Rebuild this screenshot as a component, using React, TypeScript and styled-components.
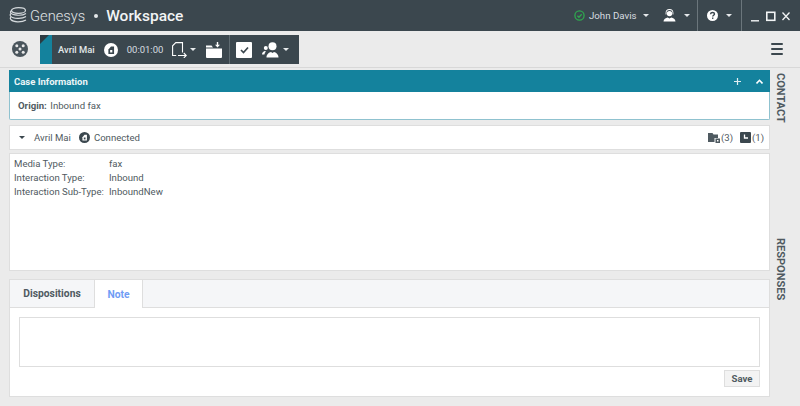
import React from 'react';
import styled, { createGlobalStyle } from 'styled-components';

const GlobalStyle = createGlobalStyle`
  html, body {
    margin: 0;
    padding: 0;
    width: 800px;
    height: 406px;
    overflow: hidden;
    background: #ebebeb;
    font-family: Roboto, "Liberation Sans", sans-serif;
  }
  * { box-sizing: border-box; }
`;

const Page = styled.div`
  width: 800px;
  height: 406px;
  display: flex;
  flex-direction: column;
  background: #ebebeb;
  color: #4f5a61;
`;

const TitleBar = styled.header`
  height: 31px;
  flex: none;
  display: flex;
  align-items: center;
  background: #3b474e;
  color: #fff;
`;

const Brand = styled.div`
  display: flex;
  align-items: center;
  padding-left: 9px;
  flex: 1;
`;

const BrandName = styled.span`
  margin-left: 3px;
  font-size: 14.7px;
  font-weight: 300;
  color: #e0e4e6;
`;

const BrandDot = styled.span`
  width: 4px;
  height: 4px;
  margin: 1px 8px 0 9px;
  border-radius: 50%;
  background: #e4e8ea;
`;

const ProductName = styled.span`
  font-size: 15.5px;
  font-weight: 500;
  color: #f2f4f5;
`;

const TitleGroup = styled.div<{ $divider?: boolean; $width: number }>`
  height: 31px;
  width: ${(p) => p.$width}px;
  flex: none;
  display: flex;
  align-items: center;
  border-left: ${(p) => (p.$divider ? '1px solid #6b767c' : 'none')};
  padding-left: ${(p) => (p.$divider ? 9 : 0)}px;
`;

const AgentName = styled.span`
  font-size: 9.7px;
  color: #d8dde0;
  margin-left: 4px;
`;

const Caret = styled.span<{ $color?: string; $gap?: number }>`
  width: 0;
  height: 0;
  flex: none;
  margin-left: ${(p) => p.$gap ?? 0}px;
  border-left: 3px solid transparent;
  border-right: 3px solid transparent;
  border-top: 3px solid ${(p) => p.$color ?? '#e6e9eb'};
`;

const ToolBar = styled.div`
  height: 37px;
  flex: none;
  display: flex;
  align-items: center;
  padding-left: 12px;
  border-bottom: 1px solid #d8d8d8;
`;

const InteractionBlock = styled.div`
  margin-left: 12px;
  width: 259px;
  height: 29px;
  margin-top: 1px;
  display: flex;
  align-items: center;
  background: #3b474e;
  color: #fff;
`;

const TealFlag = styled.span`
  position: relative;
  width: 12px;
  height: 29px;
  flex: none;
  background: #14829d;
  &::before {
    content: '';
    position: absolute;
    left: 0;
    top: 0;
    border-top: 9px solid #2c3a41;
    border-right: 9px solid transparent;
  }
`;

const CallerName = styled.span`
  margin-left: 6px;
  font-size: 9.4px;
  font-weight: 500;
  color: #e3e7e9;
`;

const Timer = styled.span`
  margin-left: 9px;
  font-size: 9.5px;
  color: #d8dde0;
`;

const BlockIcon = styled.span<{ $gap: number }>`
  display: inline-flex;
  flex: none;
  margin-left: ${(p) => p.$gap}px;
`;

const BlockDivider = styled.span`
  width: 1px;
  height: 29px;
  margin-left: 7px;
  flex: none;
  background: #5f6b71;
`;

const CheckBox = styled.span`
  width: 16px;
  height: 16px;
  margin-left: 6px;
  flex: none;
  display: flex;
  align-items: center;
  justify-content: center;
  border-radius: 1px;
  background: #fff;
`;

const Spacer = styled.div`
  flex: 1;
`;

const MenuButton = styled.div`
  width: 12px;
  margin-right: 17px;
  display: flex;
  flex-direction: column;
  gap: 2.5px;
  span {
    height: 2.5px;
    border-radius: 1px;
    background: #3b474e;
  }
`;

const Workspace = styled.div`
  flex: 1;
  display: flex;
  min-height: 0;
`;

const Content = styled.main`
  width: 761px;
  margin-left: 9px;
  padding-top: 2px;
  flex: none;
  display: flex;
  flex-direction: column;
`;

const CaseCard = styled.section`
  height: 50px;
  flex: none;
  display: flex;
  flex-direction: column;
  background: #fff;
  border: 1px solid #8fc2cf;
  border-top: none;
  border-radius: 0 0 2px 2px;
`;

const CaseHeader = styled.div`
  height: 22px;
  margin: 0 -1px;
  padding: 0 7px 0 5px;
  flex: none;
  display: flex;
  align-items: center;
  background: #14829d;
  color: #eef6f8;
  font-size: 9.5px;
  font-weight: 700;
`;

const CaseTitle = styled.span`
  flex: 1;
`;

const CaseAction = styled.span<{ $gap: number }>`
  display: inline-flex;
  margin-left: ${(p) => p.$gap}px;
`;

const CaseBody = styled.div`
  flex: 1;
  display: flex;
  align-items: center;
  gap: 3.5px;
  padding-left: 8px;
  font-size: 9.6px;
`;

const OriginLabel = styled.span`
  font-weight: 700;
`;

const PartyRow = styled.div`
  height: 25px;
  margin-top: 5px;
  padding: 0 5px 0 9px;
  flex: none;
  display: flex;
  align-items: center;
  background: #fff;
  border: 1px solid #dedede;
  font-size: 9.6px;
`;

const PartyName = styled.span`
  margin-left: 9px;
`;

const PartyStatus = styled.span`
  margin-left: 4px;
`;

const MediaBadge = styled.span`
  display: inline-flex;
  margin-left: 8px;
`;

const Counter = styled.span`
  display: inline-flex;
  align-items: center;
  gap: 1px;
  margin-left: 7px;
`;

const DetailsPanel = styled.section`
  height: 118px;
  margin-top: 3px;
  padding: 2px 4px;
  flex: none;
  background: #fff;
  border: 1px solid #dedede;
`;

const DetailRow = styled.div`
  height: 14.2px;
  display: grid;
  grid-template-columns: 95px 1fr;
  align-items: center;
  font-size: 9.6px;
  white-space: nowrap;
`;

const NotesPanel = styled.section`
  height: 118px;
  margin-top: 8px;
  flex: none;
  display: flex;
  flex-direction: column;
  background: #fff;
  border: 1px solid #dedede;
`;

const TabBar = styled.div`
  height: 28px;
  flex: none;
  display: flex;
  background: #f5f6f8;
  border-bottom: 1px solid #dedede;
`;

const Tab = styled.div<{ $active?: boolean }>`
  width: ${(p) => (p.$active ? 49 : 84)}px;
  height: 28px;
  display: flex;
  align-items: center;
  justify-content: center;
  font-size: 10.3px;
  font-weight: 700;
  color: ${(p) => (p.$active ? '#6f9cf5' : '#4f5a61')};
  background: ${(p) => (p.$active ? '#fff' : 'transparent')};
  border-left: ${(p) => (p.$active ? '1px solid #dedede' : 'none')};
  border-right: ${(p) => (p.$active ? '1px solid #dedede' : 'none')};
  border-bottom: ${(p) => (p.$active ? 'none' : '1px solid #dedede')};
`;

const NoteBody = styled.div`
  flex: 1;
  padding: 9px 9px 0;
  display: flex;
  flex-direction: column;
  align-items: flex-end;
`;

const NoteBox = styled.div`
  width: 100%;
  height: 50px;
  flex: none;
  border: 1px solid #dedede;
  background: #fff;
`;

const SaveButton = styled.div`
  width: 36px;
  height: 17px;
  margin-top: 3px;
  display: flex;
  align-items: center;
  justify-content: center;
  font-size: 9.6px;
  font-weight: 700;
  color: #4f5a61;
  background: #f3f3f3;
  border: 1px solid #dedede;
`;

const SideRail = styled.aside`
  width: 30px;
  padding-left: 4px;
  flex: none;
  display: flex;
  flex-direction: column;
  align-items: flex-start;
`;

const RailLabel = styled.span<{ $top: number }>`
  margin-top: ${(p) => p.$top}px;
  writing-mode: vertical-rl;
  font-size: 11px;
  font-weight: 700;
  color: #4f5a61;
  line-height: 12px;
`;

const GenesysLogo = () => (
  <svg width="18" height="17" viewBox="0 0 18 17" fill="none" stroke="#d5dadd" strokeWidth="1.2">
    <ellipse cx="9.500" cy="3.500" rx="7" ry="2.800" />
    <path d="M2.500 3.500C.5 5 1 7.500 8.500 8.200c3.500.2 6.500-.4 8.500-1.700" />
    <path d="M2 6.500C.2 8 1 11 8.500 11.400c3.500.2 6.500-.5 8.500-1.800" />
    <path d="M2 9.800c-1.500 1.500-.5 4.700 6.500 5 3.500.1 6.500-.6 8.500-1.900" />
  </svg>
);

const StatusIcon = () => (
  <svg width="11" height="11" viewBox="0 0 11 11" fill="none" stroke="#2fa84f" strokeWidth="1.3">
    <circle cx="5.500" cy="5.500" r="4.600" />
    <path d="M3.400 5.700l1.500 1.500 2.800-3" />
  </svg>
);

const HeadsetIcon = () => (
  <svg width="13" height="13" viewBox="0 0 13 13" fill="#fff">
    <circle cx="6.500" cy="4.600" r="2.700" />
    <path d="M2.600 5.500V4a3.900 3.900 0 0 1 7.800 0v1.500h-.8V4a3.100 3.100 0 0 0-6.200 0v1.500z" />
    <path d="M.5 12.500c0-2.300 2.300-3.800 4.200-4.100l1.800 1 1.800-1c1.900.3 4.200 1.800 4.200 4.100z" />
  </svg>
);

const HelpIcon = () => (
  <svg width="11" height="11" viewBox="0 0 11 11">
    <circle cx="5.500" cy="5.500" r="5.500" fill="#fff" />
    <path d="M3.500 4.200c.1-1.100.9-1.700 2.100-1.700s1.900.7 1.900 1.500c0 1.300-1.800 1.300-1.800 2.600" fill="none" stroke="#3b474e" strokeWidth="1.400" />
    <rect x="5" y="7.500" width="1.400" height="1.400" fill="#3b474e" />
  </svg>
);

const WindowControls = () => (
  <svg width="40" height="12" viewBox="0 0 40 12" fill="none" stroke="#f2f4f5">
    <path d="M0 10.800h8" strokeWidth="1.400" />
    <rect x="15.800" y="2.300" width="8" height="8" strokeWidth="1.600" />
    <path d="M31.500 2.500l7 7.500M38.500 2.500l-7 7.500" strokeWidth="1.300" />
  </svg>
);

const ReelIcon = () => (
  <svg width="16" height="16" viewBox="0 0 16 16">
    <circle cx="8" cy="8" r="8" fill="#4a555c" />
    <circle cx="8" cy="8" r="1.500" fill="#e8e8e8" />
    <circle cx="4.800" cy="4.800" r="1.500" fill="#e8e8e8" />
    <circle cx="11.200" cy="4.800" r="1.500" fill="#e8e8e8" />
    <circle cx="4.800" cy="11.200" r="1.500" fill="#e8e8e8" />
    <circle cx="11.200" cy="11.200" r="1.500" fill="#e8e8e8" />
  </svg>
);

const FaxBadge = ({ size, fill, ink }: { size: number; fill: string; ink: string }) => (
  <svg width={size} height={size} viewBox="0 0 16 16">
    <circle cx="8" cy="8" r="8" fill={fill} />
    <path d="M5 7.500L8 4h3.500v8.500H5z" fill={ink} />
    <rect x="7" y="8" width="2.500" height="2.800" fill={fill} />
  </svg>
);

const TransferIcon = () => (
  <svg width="15" height="16" viewBox="0 0 15 16" fill="none" stroke="#fff" strokeWidth="1.100">
    <path d="M10.500 10.500V.6H3.800L.6 3.800v9.700h3.600" />
    <path d="M6 13.500h8.300M11.800 11l2.500 2.500-2.500 2.400" />
  </svg>
);

const FolderInIcon = () => (
  <svg width="16" height="16" viewBox="0 0 16 16" fill="#fff">
    <path d="M0 3.500h5.500L7 5.500H0z" />
    <path d="M0 6.500h16v8.500a1 1 0 0 1-1 1H1a1 1 0 0 1-1-1z" />
    <path d="M10.800 0h1.400v2.800H14l-2.500 2.700L9 2.800h1.800z" />
  </svg>
);

const CheckMark = () => (
  <svg width="9" height="8" viewBox="0 0 9 8" fill="none" stroke="#3b474e" strokeWidth="1.700">
    <path d="M1 4l2.500 2.500L8 1.500" />
  </svg>
);

const ConsultIcon = () => (
  <svg width="18" height="16" viewBox="0 0 18 16" fill="#fff">
    <circle cx="10.500" cy="4.200" r="4" />
    <path d="M4.500 15.500c0-3.400 2.600-5 4.500-5.500l1.500 1 1.500-1c1.900.5 4.500 2.100 4.500 5.500z" />
    <circle cx="3.800" cy="6" r="2" />
    <path d="M0 12.500c0-2 1.300-3.300 2.800-3.600l1.200.6c-.9.800-1.400 1.800-1.600 3z" />
  </svg>
);

const PlusIcon = () => (
  <svg width="7" height="7" viewBox="0 0 7 7" stroke="#dfeef2" strokeWidth="1.200">
    <path d="M3.500 0v7M0 3.500h7" />
  </svg>
);

const ChevronUpIcon = () => (
  <svg width="7" height="5" viewBox="0 0 7 5" fill="none" stroke="#fff" strokeWidth="1.600">
    <path d="M.5 4.500L3.500 1.300l3 3.200" />
  </svg>
);

const CaseFolderIcon = () => (
  <svg width="12" height="11" viewBox="0 0 12 11" fill="#4f5a61">
    <path d="M0 1h4.500l1 1.500H10V6H6.500v4H0z" />
    <rect x="7.500" y="6.500" width="4.500" height="4.500" />
    <rect x="9" y="8" width="1.500" height="1.500" fill="#fff" />
  </svg>
);

const ClockTileIcon = () => (
  <svg width="11" height="11" viewBox="0 0 11 11">
    <rect width="11" height="11" rx="1" fill="#3b474e" />
    <path d="M4.500 2.500V6H8" fill="none" stroke="#fff" strokeWidth="1.300" />
  </svg>
);

const DETAILS = [
  { label: 'Media Type:', value: 'fax' },
  { label: 'Interaction Type:', value: 'Inbound' },
  { label: 'Interaction Sub-Type:', value: 'InboundNew' },
];

export default function App() {
  return (
    <>
      <GlobalStyle />
      <Page>
        <TitleBar>
          <Brand>
            <GenesysLogo />
            <BrandName>Genesys</BrandName>
            <BrandDot />
            <ProductName>Workspace</ProductName>
          </Brand>
          <TitleGroup $width={123}>
            <StatusIcon />
            <AgentName>John Davis</AgentName>
            <Caret $gap={6} />
            <BlockIcon $gap={14}><HeadsetIcon /></BlockIcon>
            <Caret $gap={8} />
          </TitleGroup>
          <TitleGroup $width={44} $divider>
            <HelpIcon />
            <Caret $gap={8} />
          </TitleGroup>
          <TitleGroup $width={59} $divider>
            <WindowControls />
          </TitleGroup>
        </TitleBar>

        <ToolBar>
          <ReelIcon />
          <InteractionBlock>
            <TealFlag />
            <CallerName>Avril Mai</CallerName>
            <BlockIcon $gap={9}><FaxBadge size={14} fill="#fff" ink="#3b474e" /></BlockIcon>
            <Timer>00:01:00</Timer>
            <BlockIcon $gap={9}><TransferIcon /></BlockIcon>
            <Caret $gap={3} />
            <BlockIcon $gap={10}><FolderInIcon /></BlockIcon>
            <BlockDivider />
            <CheckBox><CheckMark /></CheckBox>
            <BlockIcon $gap={10}><ConsultIcon /></BlockIcon>
            <Caret $gap={3} />
          </InteractionBlock>
          <Spacer />
          <MenuButton>
            <span />
            <span />
            <span />
          </MenuButton>
        </ToolBar>

        <Workspace>
          <Content>
            <CaseCard>
              <CaseHeader>
                <CaseTitle>Case Information</CaseTitle>
                <CaseAction $gap={0}><PlusIcon /></CaseAction>
                <CaseAction $gap={15}><ChevronUpIcon /></CaseAction>
              </CaseHeader>
              <CaseBody>
                <OriginLabel>Origin:</OriginLabel>
                <span>Inbound fax</span>
              </CaseBody>
            </CaseCard>

            <PartyRow>
              <Caret $color="#3b474e" />
              <PartyName>Avril Mai</PartyName>
              <MediaBadge><FaxBadge size={11} fill="#3b474e" ink="#fff" /></MediaBadge>
              <PartyStatus>Connected</PartyStatus>
              <Spacer />
              <Counter><CaseFolderIcon />(3)</Counter>
              <Counter><ClockTileIcon />(1)</Counter>
            </PartyRow>

            <DetailsPanel>
              {DETAILS.map((row) => (
                <DetailRow key={row.label}>
                  <span>{row.label}</span>
                  <span>{row.value}</span>
                </DetailRow>
              ))}
            </DetailsPanel>

            <NotesPanel>
              <TabBar>
                <Tab>Dispositions</Tab>
                <Tab $active>Note</Tab>
              </TabBar>
              <NoteBody>
                <NoteBox />
                <SaveButton>Save</SaveButton>
              </NoteBody>
            </NotesPanel>
          </Content>

          <SideRail>
            <RailLabel $top={5}>CONTACT</RailLabel>
            <RailLabel $top={115}>RESPONSES</RailLabel>
          </SideRail>
        </Workspace>
      </Page>
    </>
  );
}
